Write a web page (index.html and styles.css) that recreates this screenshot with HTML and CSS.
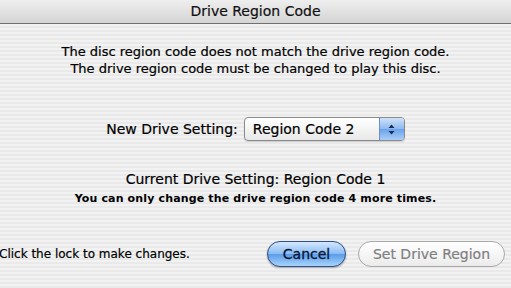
FILE: index.html
```html
<!DOCTYPE html>
<html lang="en">

<head>
    <meta charset="UTF-8">
    <title>Drive Region Code</title>
    <link rel="stylesheet" href="styles.css">
</head>

<body>
    <div class="dialog">
        <div class="title_bar">Drive Region Code</div>

        <div class="content">
            <p class="message">
                The disc region code does not match the drive region code.<br>
                The drive region code must be changed to play this disc.
            </p>

            <div class="setting_row">
                <label class="setting_label">New Drive Setting:</label>
                <div class="popup">
                    <span class="popup_text">Region Code 2</span>
                    <span class="popup_arrows">
                        <svg width="9" height="13" viewBox="0 0 9 13">
                            <path d="M1.5 5 L4.5 1.5 L7.5 5 Z" fill="#1a2a50" />
                            <path d="M1.5 8 L4.5 11.5 L7.5 8 Z" fill="#1a2a50" />
                        </svg>
                    </span>
                </div>
            </div>

            <p class="current">Current Drive Setting: Region Code 1</p>
            <p class="remaining">You can only change the drive region code 4 more times.</p>
        </div>

        <div class="bottom_row">
            <span class="lock_text">Click the lock to make changes.</span>
            <div class="buttons">
                <button class="btn btn_default">Cancel</button>
                <button class="btn btn_disabled" disabled>Set Drive Region</button>
            </div>
        </div>
    </div>
</body>

</html>
```

FILE: styles.css
```css
body {
    margin: 0;
    padding: 0;
    font-family: "DejaVu Sans", "Liberation Sans", sans-serif;
    color: #000;
}

.dialog {
    width: 511px;
    height: 288px;
    display: flex;
    flex-direction: column;
    background-color: #ededed;
    background-image: repeating-linear-gradient(180deg, #f2f2f2 0px, #f2f2f2 2px, #e9e9e9 2px, #e9e9e9 4px);
    overflow: hidden;
}

.title_bar {
    height: 23px;
    line-height: 23px;
    text-align: center;
    font-size: 14px;
    color: #111;
    -webkit-text-stroke: 0.2px #111;
    background-image: linear-gradient(180deg, #eeeeee 0%, #d4d4d4 100%);
    border-bottom: 1px solid #6f6f6f;
}

.content {
    display: flex;
    flex-direction: column;
    align-items: center;
    -webkit-text-stroke: 0.2px #000;
}

.message {
    margin: 19px 0 0 0;
    font-size: 13px;
    line-height: 17px;
    text-align: center;
}

.setting_row {
    display: flex;
    align-items: center;
    gap: 6px;
    margin-top: 40px;
}

.setting_label {
    font-size: 14px;
}

.popup {
    display: flex;
    align-items: stretch;
    width: 159px;
    height: 22px;
    border: 1px solid #8a8a8a;
    border-radius: 4px;
    background-image: linear-gradient(180deg, #ffffff 0%, #f4f4f4 50%, #e8e8e8 100%);
    box-shadow: 0 1px 1px rgba(0, 0, 0, 0.15);
    overflow: hidden;
}

.popup_text {
    flex: 1;
    padding-left: 8px;
    font-size: 14px;
    line-height: 22px;
}

.popup_arrows {
    width: 24px;
    display: flex;
    align-items: center;
    justify-content: center;
    border-left: 1px solid #6d8fc4;
    background-image: linear-gradient(180deg, #cfe2fb 0%, #8db8ef 50%, #6aa3ec 51%, #a9cdf7 100%);
    -webkit-text-stroke: 0;
}

.current {
    margin: 30px 0 0 0;
    font-size: 14px;
    line-height: 17px;
}

.remaining {
    margin: 3px 0 0 0;
    font-size: 11px;
    font-weight: bold;
    letter-spacing: 0.15px;
    line-height: 15px;
    -webkit-text-stroke: 0;
}

.bottom_row {
    display: flex;
    align-items: center;
    justify-content: space-between;
    margin-top: 35px;
    padding-right: 6px;
}

.lock_text {
    font-size: 12px;
    margin-left: -1px;
    -webkit-text-stroke: 0.2px #000;
}

.buttons {
    display: flex;
    gap: 12px;
}

.btn {
    height: 26px;
    border-radius: 13px;
    font-family: "DejaVu Sans", "Liberation Sans", sans-serif;
    font-size: 14px;
    padding: 0;
}

.btn_default {
    width: 79px;
    color: #0b1533;
    -webkit-text-stroke: 0.3px #0b1533;
    border: 1px solid #2f4f86;
    background-image: linear-gradient(180deg, #d5e8fd 0%, #8bbcf4 48%, #5a9de9 52%, #a9d4fb 100%);
    box-shadow: 0 1px 2px rgba(0, 0, 0, 0.3);
}

.btn_disabled {
    width: 147px;
    color: #808080;
    -webkit-text-stroke: 0.2px #808080;
    border: 1px solid #a8a8a8;
    background-image: linear-gradient(180deg, #ffffff 0%, #f6f6f6 50%, #ebebeb 100%);
}
```
